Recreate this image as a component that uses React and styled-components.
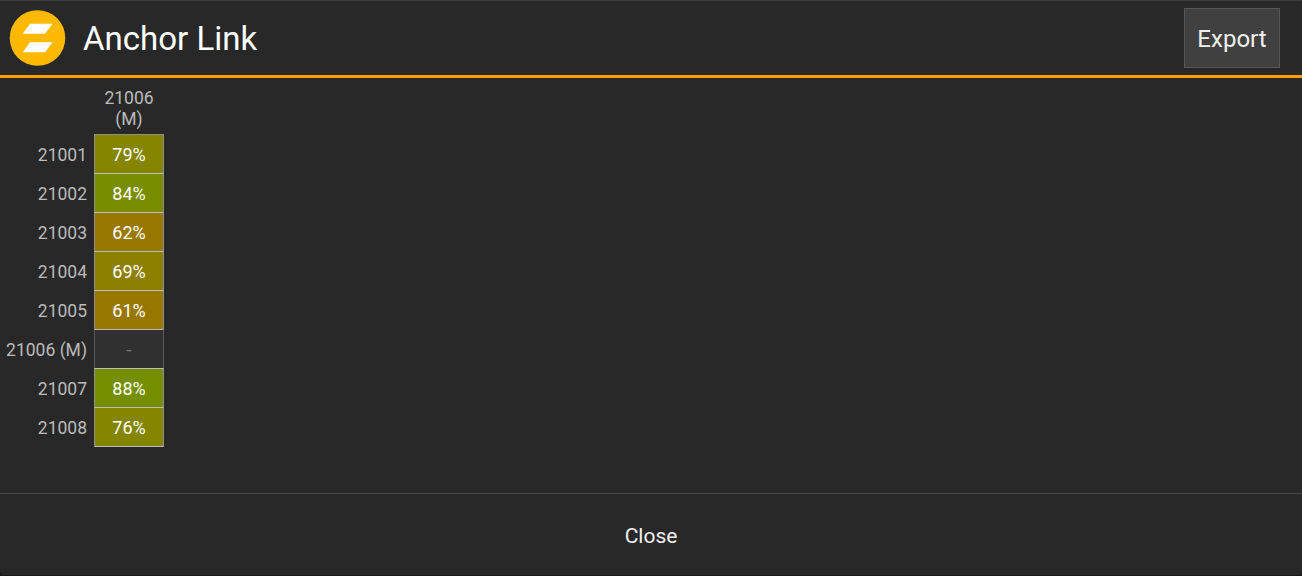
import styled, { createGlobalStyle } from "styled-components";

const GlobalStyle = createGlobalStyle`
  html, body {
    margin: 0;
    padding: 0;
    background: #1a1a1a;
  }
`;

const rows = [
  { name: "21001", value: "79%", color: "#858500" },
  { name: "21002", value: "84%", color: "#7a8c00" },
  { name: "21003", value: "62%", color: "#997800" },
  { name: "21004", value: "69%", color: "#8c8000" },
  { name: "21005", value: "61%", color: "#997800" },
  { name: "21006 (M)", value: "-", empty: true },
  { name: "21007", value: "88%", color: "#768f00" },
  { name: "21008", value: "76%", color: "#858500" },
];

export default function App() {
  return (
    <Dialog>
      <GlobalStyle />
      <Header>
        <Logo viewBox="0 0 57 57">
          <circle cx="28.5" cy="28" r="27.8" fill="#fdb900" />
          <polygon points="21,13.8 43.5,13.8 36,23.8 13.7,23.8" fill="#fff" />
          <polygon points="21,32.2 43.5,32.2 36,42.2 13.7,42.2" fill="#fff" />
        </Logo>
        <Title>Anchor Link</Title>
        <ExportButton>Export</ExportButton>
      </Header>
      <Content>
        <Matrix>
          <Corner />
          <ColumnHead>
            21006
            <br />
            (M)
          </ColumnHead>
          {rows.map((row, i) => (
            <Row key={row.name}>
              <RowLabel>{row.name}</RowLabel>
              <Cell $color={row.color} $empty={row.empty} $first={i === 0}>
                {row.value}
              </Cell>
            </Row>
          ))}
        </Matrix>
      </Content>
      <Footer>
        <CloseButton>Close</CloseButton>
      </Footer>
    </Dialog>
  );
}

const Dialog = styled.div`
  display: flex;
  flex-direction: column;
  width: 1302px;
  height: 575px;
  background: #282828;
  border-top: 1px solid #3a3a3a;
  box-sizing: border-box;
  border-radius: 0 0 4px 4px;
  font-family: Roboto, "Liberation Sans", sans-serif;
  overflow: hidden;
`;

const Header = styled.header`
  display: flex;
  align-items: center;
  flex: none;
  height: 74px;
  padding: 0 22px 0 9px;
  border-bottom: 3px solid #fb9f0f;
`;

const Logo = styled.svg`
  width: 57px;
  height: 57px;
  flex: none;
`;

const Title = styled.h1`
  flex: 1;
  margin: 0 0 0 17px;
  font-size: 33px;
  font-weight: 400;
  color: #ffffff;
`;

const ExportButton = styled.button`
  width: 96px;
  height: 60px;
  padding: 2px 0 0;
  background: #404040;
  border: 1px solid #565656;
  color: #f0f0f0;
  font-family: inherit;
  font-size: 24px;
`;

const Content = styled.main`
  flex: 1;
  padding-top: 8px;
`;

const Matrix = styled.div`
  display: grid;
  grid-template-columns: 94px 70px;
  grid-template-rows: 48px;
  grid-auto-rows: 39px;
  width: 164px;
`;

const Corner = styled.div``;

const ColumnHead = styled.div`
  padding-top: 2px;
  font-size: 17.5px;
  line-height: 21px;
  text-align: center;
  color: #bbbbbb;
`;

const Row = styled.div`
  display: contents;
`;

const RowLabel = styled.div`
  display: flex;
  align-items: center;
  justify-content: flex-end;
  padding: 2px 7px 0 0;
  font-size: 17.5px;
  color: #bbbbbb;
`;

const Cell = styled.div`
  display: flex;
  align-items: center;
  justify-content: center;
  box-sizing: border-box;
  margin-bottom: -1px;
  background: ${(p) => (p.$empty ? "#303030" : p.$color)};
  border-style: solid;
  border-width: 1px;
  border-color: ${(p) => (p.$first ? "#8f8f8f" : "#bcbcbc")}
    ${(p) => (p.$empty ? "#5a5a5a" : "#8f8f8f")} #bcbcbc;
  color: ${(p) => (p.$empty ? "#777" : "#fff")};
  font-size: 18px;
`;

const Footer = styled.footer`
  flex: none;
  height: 81px;
  border-top: 1px solid #4a4a4a;
`;

const CloseButton = styled.button`
  display: block;
  width: 100%;
  height: 100%;
  padding: 2px 0 0;
  background: none;
  border: none;
  color: #f0f0f0;
  font-family: inherit;
  font-size: 21px;
`;
